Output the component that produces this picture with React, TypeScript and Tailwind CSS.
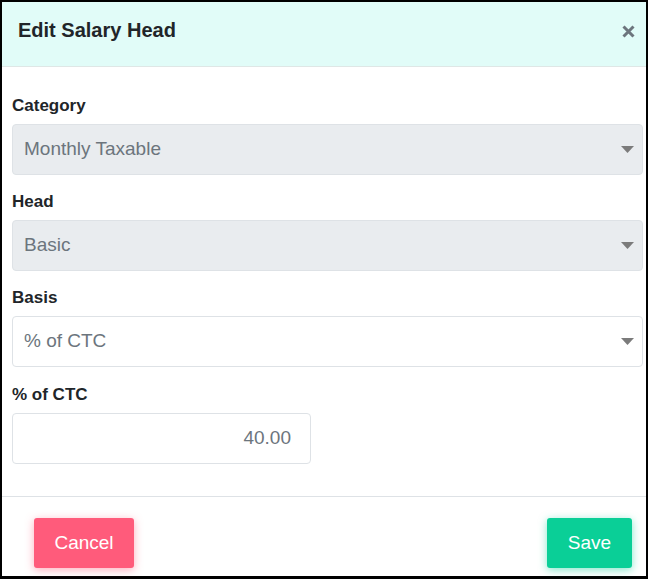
import React from "react";

function Caret() {
  return (
    <svg width="13" height="7" viewBox="0 0 13 7" className="shrink-0">
      <path d="M0 0 L13 0 L6.5 7 Z" fill="#7b7b7b" />
    </svg>
  );
}

function SelectBox({ value, disabled }: { value: string; disabled?: boolean }) {
  return (
    <div
      className={`flex h-[51px] items-center justify-between rounded-[4px] border border-[#dee2e6] pl-[11px] pr-[8px] ${
        disabled ? "bg-[#e9ecef]" : "bg-white"
      }`}
    >
      <span className="text-[19px] text-[#6c757d]">{value}</span>
      <Caret />
    </div>
  );
}

function Label({ children }: { children: React.ReactNode }) {
  return <div className="mb-[8px] text-[17px] font-bold leading-[20px] text-[#212529]">{children}</div>;
}

export default function App() {
  return (
    <div
      className="flex h-[579px] w-[648px] flex-col border-[2px] border-b-[3px] border-black bg-white"
      style={{ fontFamily: '"Liberation Sans", Arial, sans-serif' }}
    >
      <div className="flex h-[65px] shrink-0 items-center justify-between border-b border-[#dfe7e6] bg-[#e1fcf8] pb-[8px] pl-[16px] pr-[11px]">
        <div className="text-[20px] font-bold text-[#212529]">Edit Salary Head</div>
        <svg width="13" height="13" viewBox="0 0 13 13" className="mt-[2px]">
          <path d="M1.5 1.5 L11.5 11.5 M11.5 1.5 L1.5 11.5" stroke="#6c757d" strokeWidth="3" strokeLinecap="butt" />
        </svg>
      </div>
      <div className="flex flex-1 flex-col pl-[10px] pr-[3px] pt-[29px]">
        <Label>Category</Label>
        <SelectBox value="Monthly Taxable" disabled />
        <div className="h-[17px]" />
        <Label>Head</Label>
        <SelectBox value="Basic" disabled />
        <div className="h-[17px]" />
        <Label>Basis</Label>
        <SelectBox value="% of CTC" />
        <div className="h-[18px]" />
        <Label>% of CTC</Label>
        <div className="flex h-[51px] w-[299px] items-center justify-end rounded-[4px] border border-[#dee2e6] bg-white pr-[19px]">
          <span className="text-[19px] text-[#6c757d]">40.00</span>
        </div>
      </div>
      <div className="flex h-[80px] shrink-0 items-start justify-between border-t border-[#dee2e6] pl-[32px] pr-[14px] pt-[21px]">
        <button className="flex h-[50px] w-[100px] items-center justify-center rounded-[3px] bg-[#ff5b7b] text-[19px] text-white shadow-[0_2px_8px_rgba(255,91,123,0.5)]">
          Cancel
        </button>
        <button className="flex h-[50px] w-[85px] items-center justify-center rounded-[3px] bg-[#0acf97] text-[19px] text-white shadow-[0_2px_8px_rgba(10,207,151,0.5)]">
          Save
        </button>
      </div>
    </div>
  );
}
